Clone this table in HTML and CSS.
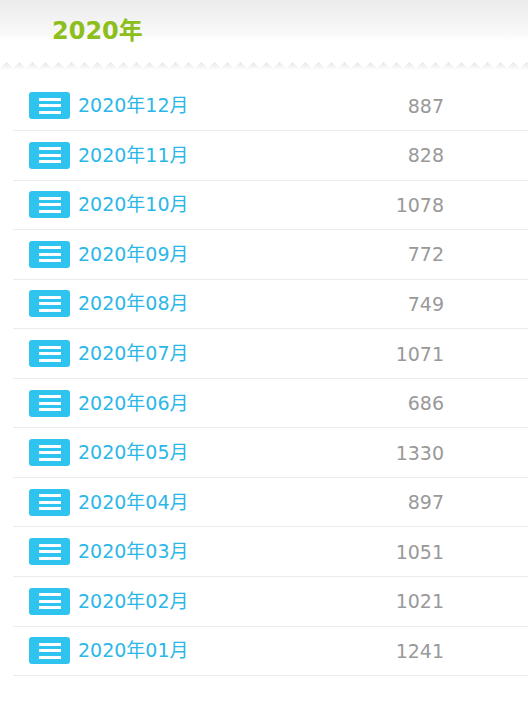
FILE: index.html
```html
<!DOCTYPE html>
<html lang="ja">
<head>
    <meta charset="UTF-8">
    <meta name="viewport" content="width=device-width, initial-scale=1.0">
    <title>2020年</title>
    <link rel="stylesheet" href="styles.css">
</head>
<body>
    <div class="archive">
        <div class="archive-head">
            <h2 class="archive-title">2020年</h2>
        </div>
        <div class="zigzag"></div>
        <ul class="month-list">
            <li class="month"><span class="icon"><i></i><i></i><i></i></span><a class="month-name" href="#">2020年12月</a><span class="count">887</span></li>
            <li class="month"><span class="icon"><i></i><i></i><i></i></span><a class="month-name" href="#">2020年11月</a><span class="count">828</span></li>
            <li class="month"><span class="icon"><i></i><i></i><i></i></span><a class="month-name" href="#">2020年10月</a><span class="count">1078</span></li>
            <li class="month"><span class="icon"><i></i><i></i><i></i></span><a class="month-name" href="#">2020年09月</a><span class="count">772</span></li>
            <li class="month"><span class="icon"><i></i><i></i><i></i></span><a class="month-name" href="#">2020年08月</a><span class="count">749</span></li>
            <li class="month"><span class="icon"><i></i><i></i><i></i></span><a class="month-name" href="#">2020年07月</a><span class="count">1071</span></li>
            <li class="month"><span class="icon"><i></i><i></i><i></i></span><a class="month-name" href="#">2020年06月</a><span class="count">686</span></li>
            <li class="month"><span class="icon"><i></i><i></i><i></i></span><a class="month-name" href="#">2020年05月</a><span class="count">1330</span></li>
            <li class="month"><span class="icon"><i></i><i></i><i></i></span><a class="month-name" href="#">2020年04月</a><span class="count">897</span></li>
            <li class="month"><span class="icon"><i></i><i></i><i></i></span><a class="month-name" href="#">2020年03月</a><span class="count">1051</span></li>
            <li class="month"><span class="icon"><i></i><i></i><i></i></span><a class="month-name" href="#">2020年02月</a><span class="count">1021</span></li>
            <li class="month"><span class="icon"><i></i><i></i><i></i></span><a class="month-name" href="#">2020年01月</a><span class="count">1241</span></li>
        </ul>
    </div>
</body>
</html>
```

FILE: styles.css
```css
body {
    margin: 0;
    background: #fff;
    font-family: "DejaVu Sans", "Noto Sans CJK JP", sans-serif;
}

.archive-head {
    height: 62px;
    background: linear-gradient(#ebebeb, #fafafa 36px, #fff 40px);
}

.archive-title {
    margin: 0;
    padding: 15px 0 0 52px;
    font-size: 24px;
    line-height: 32px;
    font-weight: bold;
    color: #8cbe1c;
}

.zigzag {
    height: 8px;
    background:
        linear-gradient(135deg, #fff 4.6px, transparent 4.6px) 0 0 / 13px 8px,
        linear-gradient(225deg, #fff 4.6px, transparent 4.6px) 0 0 / 13px 8px,
        linear-gradient(#e6e6e6, #fff);
}

.month-list {
    list-style: none;
    margin: 11.5px 0 0 13px;
    padding: 0;
}

.month {
    display: flex;
    align-items: center;
    height: 48.55px;
    padding-left: 16px;
    border-bottom: 1px solid #ebebeb;
}

.icon {
    width: 41px;
    height: 27px;
    margin-right: 8px;
    border-radius: 3px;
    background: #2fc3ef;
    display: flex;
    flex-direction: column;
    justify-content: center;
    align-items: center;
    gap: 3.5px;
}

.icon i {
    display: block;
    width: 22px;
    height: 3px;
    background: #fff;
}

.month-name {
    color: #2bb7e8;
    text-decoration: none;
    font-size: 19px;
    padding-bottom: 4px;
}

.count {
    margin-left: auto;
    width: 100px;
    margin-right: 84px;
    text-align: right;
    color: #999;
    font-size: 19px;
}
```
